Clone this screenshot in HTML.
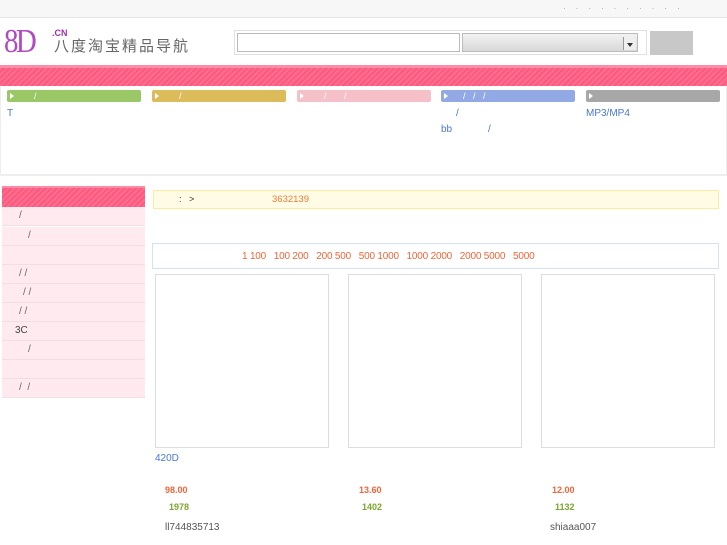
<!DOCTYPE html>
<html><head><meta charset="utf-8"><style>
*{margin:0;padding:0;box-sizing:border-box}
body{width:727px;height:545px;background:#fff;position:relative;overflow:hidden;font-family:"Liberation Sans","Noto Sans CJK SC",sans-serif;font-size:10px}
.a{position:absolute}
.cat{position:absolute;top:90px;width:134px;height:12px;border-radius:2px;color:#fff;font-size:9px;line-height:12px;padding-left:12px}
.cat:before{content:"";position:absolute;left:3px;top:3px;border-left:4px solid #fff;border-top:3px solid transparent;border-bottom:3px solid transparent}
.row{position:absolute;left:2px;width:143px;height:19px;background:#ffebef;border-bottom:1px solid #f0dfe3;font-size:10px;color:#666;line-height:18px}
.box{position:absolute;top:274px;width:174px;height:174px;border:1px solid #ddd}
.lnk{color:#4a77d6;font-size:10px}
</style></head><body>
<div class="a" style="left:0;top:0;width:727px;height:18px;background:#f7f7f7;border-bottom:1px solid #e4e4e4"></div>
<div class="a" style="left:563px;top:4px;color:#999;letter-spacing:10px;font-size:8px">··········</div>
<div class="a" style="left:4px;top:26px;font-family:'Liberation Serif',serif;font-size:34px;color:#b04ac0;line-height:32px;letter-spacing:-3px;transform:scaleX(0.85);transform-origin:left">8D</div>
<div class="a" style="left:52px;top:28px;font-size:9px;color:#a030b0;font-weight:bold">.CN</div>
<div class="a" style="left:54px;top:38px;font-size:15px;color:#666;line-height:18px;letter-spacing:2px">八度淘宝精品导航</div>
<div class="a" style="left:234px;top:30px;width:413px;height:25px;border:1px solid #e0e0e0"></div>
<div class="a" style="left:237px;top:33px;width:223px;height:19px;border:1px solid #bbb"></div>
<div class="a" style="left:462px;top:33px;width:176px;height:19px;border:1px solid #bbb;background:linear-gradient(#f2f2f2,#d8d8d8)"></div>
<div class="a" style="left:623px;top:37px;width:13px;height:13px;border-left:1px solid #999;background:#eee"></div>
<div class="a" style="left:627px;top:43px;border-top:4px solid #333;border-left:3px solid transparent;border-right:3px solid transparent"></div>
<div class="a" style="left:650px;top:31px;width:43px;height:24px;background:#c8c8c8"></div>
<div class="a" style="left:0;top:65px;width:727px;height:21px;background:repeating-linear-gradient(135deg,#ff6d8e 0 2px,#fb5a7f 2px 4px);border-top:3px solid #ff8ba6"></div>
<div class="a" style="left:0;top:86px;width:727px;height:90px;border-bottom:2px solid #eee;border-left:1px solid #eee;border-right:1px solid #eee"></div>
<div class="cat" style="left:7px;background:#9cc767">&nbsp;&nbsp;&nbsp;&nbsp;&nbsp;&nbsp;/</div>
<div class="cat" style="left:152px;background:#dcbb5a">&nbsp;&nbsp;&nbsp;&nbsp;&nbsp;&nbsp;/</div>
<div class="cat" style="left:297px;background:#f6c0c8">&nbsp;&nbsp;&nbsp;&nbsp;&nbsp;&nbsp;/&nbsp;&nbsp;&nbsp;&nbsp;&nbsp;&nbsp;&nbsp;/</div>
<div class="cat" style="left:441px;background:#93a9e6">&nbsp;&nbsp;&nbsp;&nbsp;/&nbsp;&nbsp;&nbsp;/&nbsp;&nbsp;&nbsp;/</div>
<div class="cat" style="left:586px;background:#a7a7a7"></div>
<div class="a lnk" style="left:7px;top:108px">T</div>
<div class="a lnk" style="left:456px;top:108px">/</div>
<div class="a lnk" style="left:586px;top:108px">MP3/MP4</div>
<div class="a lnk" style="left:441px;top:124px">bb</div>
<div class="a lnk" style="left:488px;top:124px">/</div>
<div class="a" style="left:2px;top:186px;width:143px;height:21px;background:repeating-linear-gradient(135deg,#ff6d8e 0 2px,#fb5a7f 2px 4px);border-top:2px solid #ff8ba6"></div>
<div class="row" style="top:207px;padding-left:17px">/</div>
<div class="row" style="top:227px;padding-left:26px">/</div>
<div class="row" style="top:246px"></div>
<div class="row" style="top:265px;padding-left:17px">/ /</div>
<div class="row" style="top:284px;padding-left:21px">/ /</div>
<div class="row" style="top:303px;padding-left:17px">/ /</div>
<div class="row" style="top:322px;padding-left:13px;color:#444">3C</div>
<div class="row" style="top:341px;padding-left:26px">/</div>
<div class="row" style="top:360px"></div>
<div class="row" style="top:379px;padding-left:17px">/ &nbsp;/</div>
<div class="a" style="left:153px;top:190px;width:566px;height:19px;background:#fffbe4;border:1px solid #fde9a0"></div>
<div class="a" style="left:179px;top:194px;font-size:9px;color:#333">:&nbsp;&nbsp;&nbsp;&gt;</div>
<div class="a" style="left:272px;top:194px;color:#f07d3a;font-size:9.5px">3632139</div>
<div class="a" style="left:152px;top:243px;width:567px;height:26px;border:1px solid #d4e2f4"></div>
<div class="a" style="left:242px;top:251px;color:#f2653a;font-size:10px;letter-spacing:-0.2px">1 100 &nbsp;&nbsp;100 200 &nbsp;&nbsp;200 500 &nbsp;&nbsp;500 1000 &nbsp;&nbsp;1000 2000 &nbsp;&nbsp;2000 5000 &nbsp;&nbsp;5000</div>
<div class="box" style="left:155px"></div>
<div class="box" style="left:348px"></div>
<div class="box" style="left:541px"></div>
<div class="a lnk" style="left:155px;top:453px">420D</div>
<div class="a" style="left:165px;top:485px;color:#f2653a;font-weight:bold;font-size:9px">98.00</div>
<div class="a" style="left:359px;top:485px;color:#f2653a;font-weight:bold;font-size:9px">13.60</div>
<div class="a" style="left:552px;top:485px;color:#f2653a;font-weight:bold;font-size:9px">12.00</div>
<div class="a" style="left:169px;top:502px;color:#7aa62e;font-weight:bold;font-size:9px">1978</div>
<div class="a" style="left:362px;top:502px;color:#7aa62e;font-weight:bold;font-size:9px">1402</div>
<div class="a" style="left:555px;top:502px;color:#7aa62e;font-weight:bold;font-size:9px">1132</div>
<div class="a" style="left:165px;top:522px;color:#555">ll744835713</div>
<div class="a" style="left:550px;top:522px;color:#555">shiaaa007</div>
</body></html>
